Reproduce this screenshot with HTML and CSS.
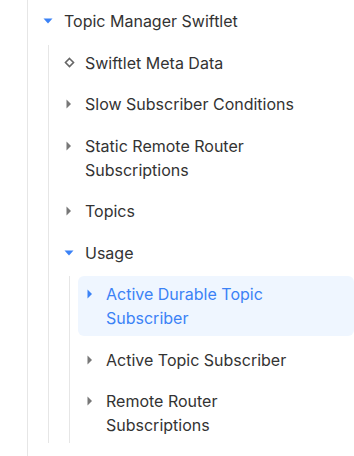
FILE: index.html
```html
<!DOCTYPE html>
<html>
<head>
<meta charset="utf-8">
<link rel="stylesheet" href="styles.css">
</head>
<body>
<div class="panel">
  <ul class="tree root">
    <li class="node">
      <div class="row">
        <span class="icon"><svg width="10" height="6" viewBox="0 0 10 6"><path d="M0.5 0.5h9L5 5.5z" fill="#3b82f6"/></svg></span>
        <span class="label">Topic Manager Swiftlet</span>
      </div>
      <ul class="tree">
        <li class="node">
          <div class="row">
            <span class="icon"><svg width="11" height="11" viewBox="0 0 11 11"><path d="M5.5 1.5L9.5 5.5L5.5 9.5L1.5 5.5z" fill="none" stroke="#666" stroke-width="1.6"/></svg></span>
            <span class="label">Swiftlet Meta Data</span>
          </div>
        </li>
        <li class="node">
          <div class="row">
            <span class="icon"><svg width="6" height="10" viewBox="0 0 6 10"><path d="M0.5 0.5L5 5L0.5 9.5z" fill="#777"/></svg></span>
            <span class="label">Slow Subscriber Conditions</span>
          </div>
        </li>
        <li class="node">
          <div class="row">
            <span class="icon"><svg width="6" height="10" viewBox="0 0 6 10"><path d="M0.5 0.5L5 5L0.5 9.5z" fill="#777"/></svg></span>
            <span class="label">Static Remote Router Subscriptions</span>
          </div>
        </li>
        <li class="node">
          <div class="row">
            <span class="icon"><svg width="6" height="10" viewBox="0 0 6 10"><path d="M0.5 0.5L5 5L0.5 9.5z" fill="#777"/></svg></span>
            <span class="label">Topics</span>
          </div>
        </li>
        <li class="node">
          <div class="row">
            <span class="icon"><svg width="10" height="6" viewBox="0 0 10 6"><path d="M0.5 0.5h9L5 5.5z" fill="#3b82f6"/></svg></span>
            <span class="label">Usage</span>
          </div>
          <ul class="tree last">
            <li class="node">
              <div class="row selected">
                <span class="icon"><svg width="6" height="10" viewBox="0 0 6 10"><path d="M0.5 0.5L5 5L0.5 9.5z" fill="#3b82f6"/></svg></span>
                <span class="label">Active Durable Topic Subscriber</span>
              </div>
            </li>
            <li class="node">
              <div class="row">
                <span class="icon"><svg width="6" height="10" viewBox="0 0 6 10"><path d="M0.5 0.5L5 5L0.5 9.5z" fill="#777"/></svg></span>
                <span class="label">Active Topic Subscriber</span>
              </div>
            </li>
            <li class="node">
              <div class="row">
                <span class="icon"><svg width="6" height="10" viewBox="0 0 6 10"><path d="M0.5 0.5L5 5L0.5 9.5z" fill="#777"/></svg></span>
                <span class="label">Remote Router Subscriptions</span>
              </div>
            </li>
          </ul>
        </li>
      </ul>
    </li>
  </ul>
</div>
</body>
</html>
```

FILE: styles.css
```css
html, body {
  margin: 0;
  padding: 0;
  background: #ffffff;
  height: 100%;
}

body {
  font-family: Inter, "Noto Sans", sans-serif;
  font-size: 16px;
  line-height: 24px;
  color: #333333;
  overflow: hidden;
}

.panel {
  margin-left: 27px;
  border-left: 1px solid #e6e6e6;
  min-height: 100%;
  padding-left: 8px;
  padding-top: 3px;
  box-sizing: border-box;
}

.tree {
  list-style: none;
  margin: 0;
  padding: 0;
  display: flex;
  flex-direction: column;
  gap: 5.5px;
}

.tree .tree {
  margin-left: 12px;
  border-left: 1px solid #e6e6e6;
  padding-left: 8px;
}

.node {
  display: flex;
  flex-direction: column;
  gap: 5.5px;
}

.row {
  display: flex;
  align-items: flex-start;
  padding: 6px 0 6px 4px;
  border-radius: 6px;
}

.icon {
  width: 16px;
  height: 24px;
  flex: none;
  display: flex;
  align-items: center;
  justify-content: center;
  margin-right: 8px;
}

.icon svg {
  display: block;
}

.label {
  flex: 1;
  padding-right: 45px;
}

.row.selected {
  background: #eff6ff;
  color: #3b82f6;
}
```
